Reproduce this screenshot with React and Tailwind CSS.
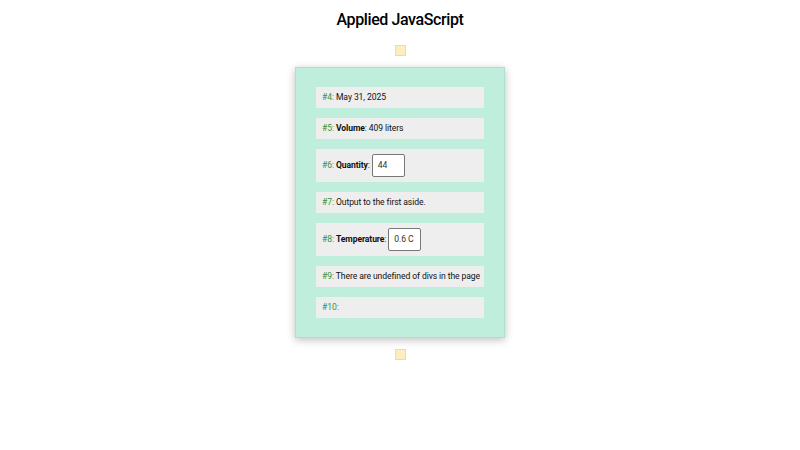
const rows = [
  { id: 4, content: <span>May 31, 2025</span> },
  { id: 5, content: <span><b className="font-bold">Volume</b>: 409 liters</span> },
  { id: 6, label: "Quantity", value: "44" },
  { id: 7, content: <span>Output to the first aside.</span> },
  { id: 8, label: "Temperature", value: "0.6 C" },
  { id: 9, content: <span>There are undefined of divs in the page</span> },
  { id: 10, content: null },
];

const Square = ({ className = "" }) => (
  <div className={`w-[11px] h-[11px] bg-[#fdefbd] border border-[#f3dc98] ${className}`} />
);

export default function App() {
  return (
    <div className="w-[800px] h-[450px] bg-white flex flex-col items-center" style={{ fontFamily: "Roboto, 'Liberation Sans', sans-serif" }}>
      <h1 className="mt-[9px] text-[16px] leading-[22px] font-medium tracking-[-0.4px] text-black">Applied JavaScript</h1>
      <Square className="mt-[14px]" />
      <div className="mt-[11px] w-[210px] bg-[#bfeedd] border border-[#aee0cd] shadow-[0_2px_8px_rgba(0,0,0,0.25)] px-[20px] py-[19px] flex flex-col gap-[10px]">
        {rows.map((r) => (
          <div key={r.id} className="bg-[#eeeeee] px-[6px] text-[8.6px] tracking-[-0.1px] text-[#111] flex items-center min-h-[20px]">
            {r.label ? (
              <div className="flex items-center py-[5px] whitespace-nowrap">
                <span className="text-[#3a923a]">#{r.id}:</span>
                <span className="ml-[2px] font-bold">{r.label}</span>
                <span>:</span>
                <div className="ml-[2px] w-[33px] h-[23px] shrink-0 bg-white border border-[#777] rounded-[2px] flex items-center px-[5px] text-[#333] whitespace-nowrap">{r.value}</div>
              </div>
            ) : (
              <div className="py-[5px] leading-[11px] whitespace-nowrap">
                <span className="text-[#3a923a]">#{r.id}:</span> {r.content}
              </div>
            )}
          </div>
        ))}
      </div>
      <Square className="mt-[11px]" />
    </div>
  );
}
